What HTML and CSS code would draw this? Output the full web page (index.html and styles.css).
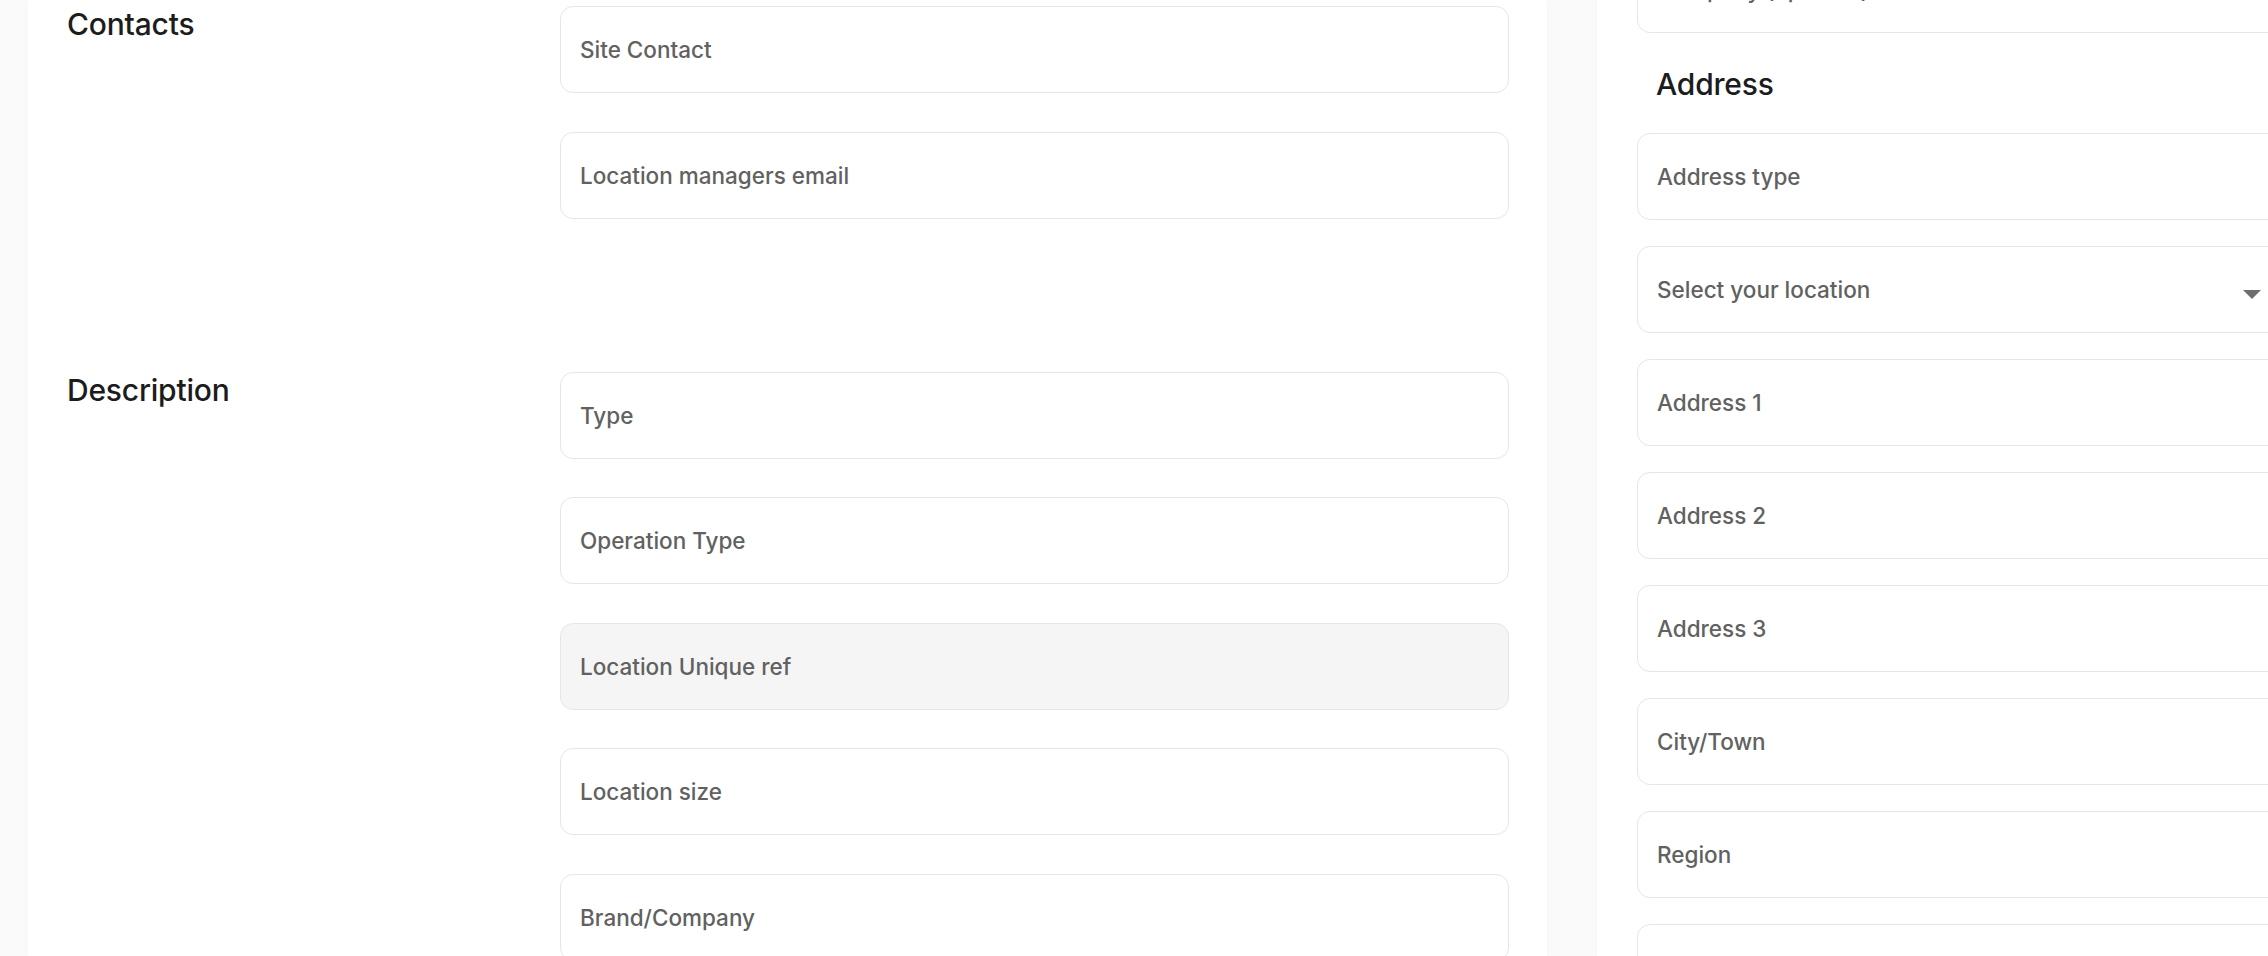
FILE: index.html
```html
<!DOCTYPE html>
<html lang="en">
<head>
    <meta charset="UTF-8">
    <meta name="viewport" content="width=device-width, initial-scale=1.0">
    <title>Location details</title>
    <link rel="stylesheet" href="styles.css">
</head>
<body>
    <div class="page">
        <div class="panel panel-main">
            <div class="form-section">
                <h2>Contacts</h2>
                <div class="fields">
                    <input type="text" class="field" placeholder="Site Contact">
                    <input type="text" class="field" placeholder="Location managers email">
                </div>
            </div>

            <div class="form-section">
                <h2>Description</h2>
                <div class="fields">
                    <input type="text" class="field" placeholder="Type">
                    <input type="text" class="field" placeholder="Operation Type">
                    <input type="text" class="field field-locked" placeholder="Location Unique ref" disabled>
                    <input type="text" class="field" placeholder="Location size">
                    <input type="text" class="field" placeholder="Brand/Company">
                </div>
            </div>
        </div>

        <div class="panel panel-side">
            <div class="side-fields">
                <input type="text" class="field" placeholder="Company (optional)">
            </div>

            <h2 class="side-title">Address</h2>
            <div class="side-fields">
                <input type="text" class="field" placeholder="Address type">
                <div class="select-wrap">
                    <select class="field field-select">
                        <option>Select your location</option>
                    </select>
                </div>
                <input type="text" class="field" placeholder="Address 1">
                <input type="text" class="field" placeholder="Address 2">
                <input type="text" class="field" placeholder="Address 3">
                <input type="text" class="field" placeholder="City/Town">
                <input type="text" class="field" placeholder="Region">
                <input type="text" class="field" placeholder="Postcode">
            </div>
        </div>
    </div>
</body>
</html>
```

FILE: styles.css
```css
* {
    margin: 0;
    padding: 0;
    box-sizing: border-box;
    font-family: 'Inter', 'Liberation Sans', sans-serif;
}

html, body {
    height: 100%;
    overflow: hidden;
}

body {
    background-color: #fafafa;
    color: #1c1c1c;
}

.page {
    display: flex;
    gap: 50px;
    padding-left: 28px;
    height: 100%;
}

.panel {
    background: #fff;
    box-shadow: 0 0 10px rgba(0, 0, 0, 0.02);
    flex-shrink: 0;
}

.panel-main {
    width: 1519px;
    padding: 6px 38px 0 39px;
}

.panel-side {
    width: 728px;
    padding: 0 40px;
    margin-top: -54px;
}

.form-section {
    display: grid;
    grid-template-columns: 493px 1fr;
    margin-bottom: 153px;
}

h2 {
    font-size: 30px;
    font-weight: 500;
    line-height: normal;
    color: #1c1c1c;
    letter-spacing: -0.2px;
}

.fields {
    display: flex;
    flex-direction: column;
    gap: 38.5px;
}

.side-fields {
    display: flex;
    flex-direction: column;
    gap: 26px;
}

.side-title {
    margin: 33px 0 31px 19px;
}

.field {
    display: block;
    width: 100%;
    height: 87px;
    padding: 0 19px;
    border: 1.5px solid #e6e6e6;
    border-radius: 13px;
    background: #fff;
    font-size: 22.5px;
    font-weight: 500;
    color: #616161;
    outline: none;
}

.field::placeholder {
    color: #616161;
    opacity: 1;
}

.field-locked {
    background: #f5f5f5;
}

.select-wrap {
    position: relative;
}

.field-select {
    appearance: none;
    -webkit-appearance: none;
}

.select-wrap::after {
    content: '';
    position: absolute;
    right: 24px;
    top: 44px;
    border-left: 9px solid transparent;
    border-right: 9px solid transparent;
    border-top: 9px solid #6e6e6e;
    pointer-events: none;
}
```
